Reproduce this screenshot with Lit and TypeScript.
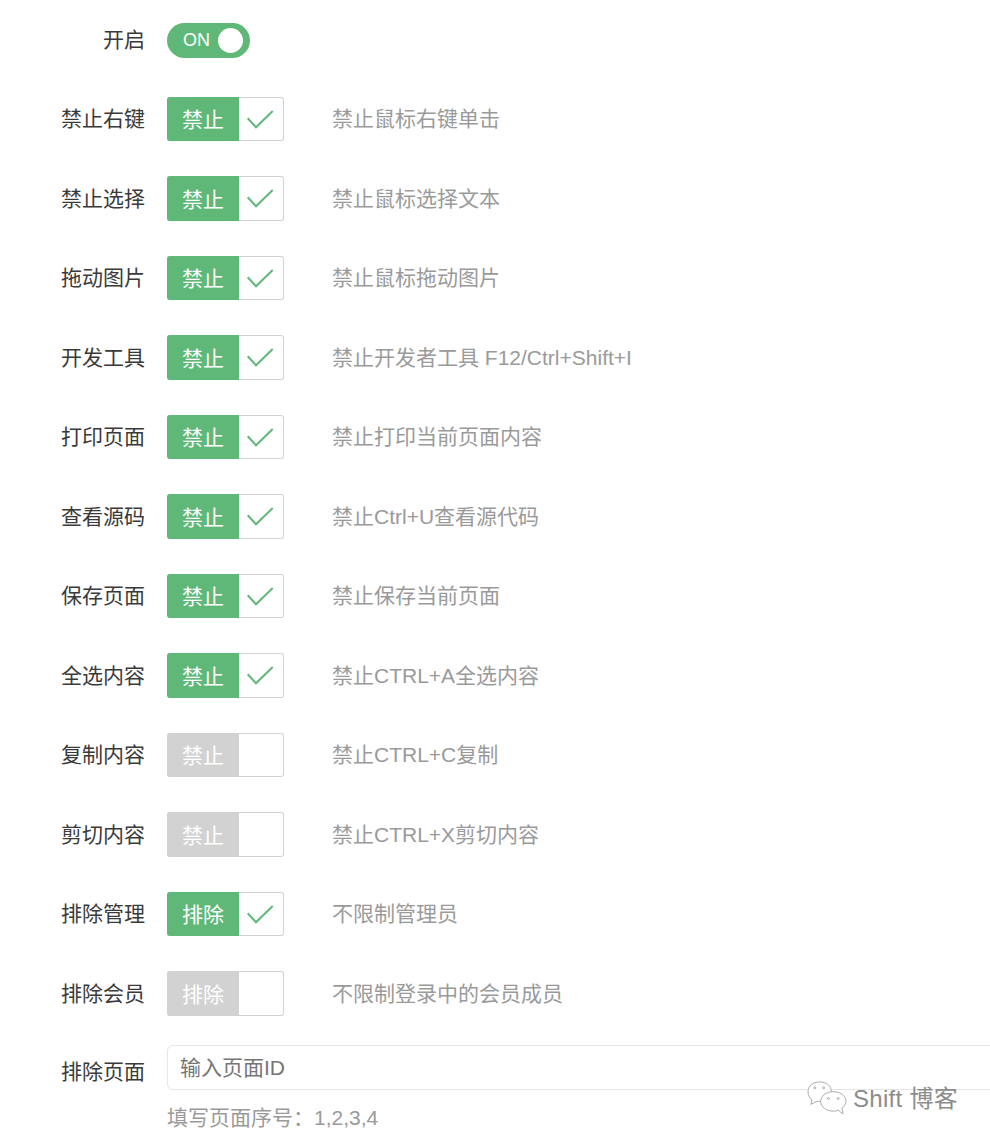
import { LitElement, html, css } from "lit";
import { customElement } from "lit/decorators.js";

const ROWS: [string, string, string, boolean][] = [
  ["禁止右键", "禁止", "禁止鼠标右键单击", true],
  ["禁止选择", "禁止", "禁止鼠标选择文本", true],
  ["拖动图片", "禁止", "禁止鼠标拖动图片", true],
  ["开发工具", "禁止", "禁止开发者工具 F12/Ctrl+Shift+I", true],
  ["打印页面", "禁止", "禁止打印当前页面内容", true],
  ["查看源码", "禁止", "禁止Ctrl+U查看源代码", true],
  ["保存页面", "禁止", "禁止保存当前页面", true],
  ["全选内容", "禁止", "禁止CTRL+A全选内容", true],
  ["复制内容", "禁止", "禁止CTRL+C复制", false],
  ["剪切内容", "禁止", "禁止CTRL+X剪切内容", false],
  ["排除管理", "排除", "不限制管理员", true],
  ["排除会员", "排除", "不限制登录中的会员成员", false],
];

@customElement("app-root")
export class AppRoot extends LitElement {
  static styles = css`
    :host {
      display: block;
      position: relative;
      width: 990px;
      height: 1141px;
      overflow: hidden;
      background: #fff;
      font-family: "Liberation Sans", "Noto Sans CJK SC", sans-serif;
      font-size: 21px;
      color: #3a3a3a;
    }
    .form {
      display: flex;
      flex-direction: column;
      padding-top: 23px;
    }
    .row {
      display: flex;
      align-items: center;
      height: 44.5px;
      margin-bottom: 35px;
    }
    .row.first {
      height: 35px;
      margin-bottom: 38.9px;
    }
    .label {
      width: 145px;
      margin-right: 22px;
      text-align: right;
      flex: none;
      line-height: 30px;
    }
    .first .label {
      padding-bottom: 2px;
    }
    .switch {
      width: 83px;
      height: 35px;
      box-sizing: border-box;
      border-radius: 18px;
      background: #5fb878;
      color: #fff;
      display: flex;
      align-items: center;
      justify-content: space-between;
      padding: 0 7px 0 16px;
      font-size: 18px;
    }
    .knob {
      width: 25px;
      height: 25px;
      border-radius: 50%;
      background: #fff;
    }
    .check {
      width: 117px;
      height: 44.5px;
      box-sizing: border-box;
      display: flex;
      flex: none;
      border: 1px solid #d2d2d2;
      border-left: none;
      border-radius: 3px;
      background: #fff;
      margin-right: 48px;
    }
    .tag {
      width: 72px;
      margin: -1px 0;
      padding-bottom: 2px;
      box-sizing: border-box;
      display: flex;
      align-items: center;
      justify-content: center;
      background: #5fb878;
      color: #fff;
      border-radius: 3px 0 0 3px;
    }
    .off .tag {
      background: #d2d2d2;
    }
    .mark {
      flex: 1;
      display: flex;
      align-items: center;
      justify-content: center;
      padding-bottom: 1px;
    }
    .mark svg {
      width: 28px;
      height: 24px;
      fill: none;
      stroke: #5fb878;
      stroke-width: 2;
    }
    .hint {
      color: #9a9a9a;
      white-space: nowrap;
      padding-bottom: 4px;
    }
    .page {
      display: flex;
      align-items: flex-start;
      margin-top: -6px;
    }
    .page .label {
      margin-top: 12px;
    }
    .field {
      display: flex;
      flex-direction: column;
      gap: 16px;
    }
    .input {
      width: 900px;
      height: 45px;
      box-sizing: border-box;
      display: flex;
      align-items: center;
      padding: 0 12px 3px;
      border: 1px solid #e6e6e6;
      border-radius: 6px;
      color: #757575;
      background: #fff;
    }
    .note {
      color: #9a9a9a;
      line-height: 24px;
    }
    .mark-wm {
      position: absolute;
      left: 806px;
      top: 1079px;
      display: flex;
      align-items: center;
      gap: 6px;
      color: #8c8c8c;
      font-size: 24px;
      letter-spacing: 0.3px;
    }
    .mark-wm span {
      padding-bottom: 3px;
    }
    .mark-wm svg {
      width: 41px;
      height: 35px;
      fill: #fff;
      stroke: #a8a8a8;
      stroke-width: 1;
    }
  `;

  render() {
    return html`
      <div class="form">
        <div class="row first">
          <div class="label">开启</div>
          <div class="switch"><span>ON</span><span class="knob"></span></div>
        </div>
        ${ROWS.map(
          ([label, tag, hint, on]) => html`
            <div class="row">
              <div class="label">${label}</div>
              <div class="check ${on ? "" : "off"}">
                <div class="tag">${tag}</div>
                <div class="mark">
                  ${on
                    ? html`<svg viewBox="0 0 28 24"><path d="M0.7 11.3 L9 20.3 L25.7 4" /></svg>`
                    : ""}
                </div>
              </div>
              <div class="hint">${hint}</div>
            </div>
          `
        )}
        <div class="page">
          <div class="label">排除页面</div>
          <div class="field">
            <div class="input">输入页面ID</div>
            <div class="note">填写页面序号：1,2,3,4</div>
          </div>
        </div>
      </div>
      <div class="mark-wm">
        <svg viewBox="0 0 42 36">
          <path d="M14 1 C7 1 2 5 2 11 C2 15 4 18 6 19 L5 24 L11 21 C12 21 13 21 15 21 C22 21 26 16 26 11 C26 5 21 1 14 1 Z" />
          <path d="M28 11 C21 11 15 15 15 21 C15 27 21 31 28 31 C30 31 31 31 33 30 L38 34 L37 28 C39 26 41 24 41 21 C41 15 35 11 28 11 Z" />
          <circle cx="23" cy="18" r="1" />
          <circle cx="33" cy="18" r="1" />
          <circle cx="9" cy="7" r="1" />
          <circle cx="18" cy="7" r="1" />
        </svg>
        <span>Shift 博客</span>
      </div>
    `;
  }
}
